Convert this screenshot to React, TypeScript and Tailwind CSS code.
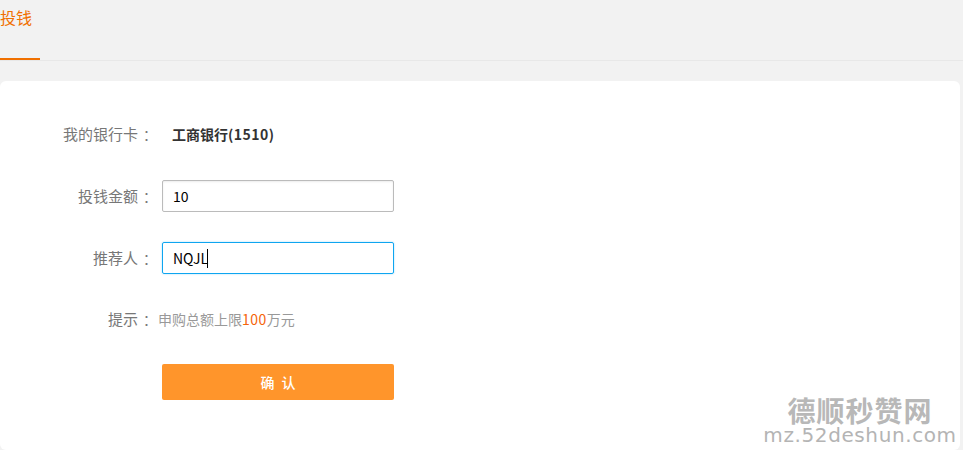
const font = "font-['Noto_Sans_CJK_SC','Liberation_Sans',sans-serif]";

const Label = ({ children }: { children: string }) => (
  <div className="flex w-[162px] shrink-0 items-center justify-end pr-[5px] text-[15px] text-[#777]">
    <span>{children}</span>
    <span className="ml-[5px] text-[14px]">：</span>
  </div>
);

export default function App() {
  return (
    <div className={`relative h-[450px] w-[963px] overflow-hidden bg-[#f2f2f2] ${font}`}>
      <div className="flex h-[61px] border-b border-[#e8e8e8]">
        <div className="h-[60px] w-[40px] border-b-2 border-[#f07000] pt-[6px] text-[16px] leading-[22px] text-[#f07000]">
          投钱
        </div>
      </div>

      <div className="mt-[20px] mr-[3px] flex h-[369px] flex-col rounded-[6px] bg-white">
        <div className="mt-[41px] flex h-[24px] items-center">
          <Label>我的银行卡</Label>
          <div className="pl-[10px] text-[14px] font-bold text-[#333]">
            工商银行<span className="tracking-[0.5px]">(1510)</span>
          </div>
        </div>

        <div className="mt-[34px] flex h-[32px] items-center">
          <Label>投钱金额</Label>
          <div className="flex h-[32px] w-[232px] items-center rounded-[2px] border border-[#bbb] pl-[10px] text-[14px] text-black shadow-[inset_0_1px_2px_rgba(0,0,0,0.08)]">
            10
          </div>
        </div>

        <div className="mt-[30px] flex h-[32px] items-center">
          <Label>推荐人</Label>
          <div className="flex h-[32px] w-[232px] items-center rounded-[2px] border border-[#0fa5f0] pl-[10px] text-[14px] text-black shadow-[0_0_2px_rgba(15,165,240,0.4)]">
            NQJL<span className="ml-[-1px] h-[19px] w-px bg-black" />
          </div>
        </div>

        <div className="mt-[35px] flex h-[20px] items-center">
          <Label>提示</Label>
          <div className="ml-[-4px] text-[14px] text-[#999]">
            申购总额上限<span className="tracking-[0.5px] text-[#f5640a]">100</span>万元
          </div>
        </div>

        <div className="mt-[35px] flex pl-[162px]">
          <div className="flex h-[36px] w-[232px] items-center justify-center gap-[7px] rounded-[2px] bg-[#ff952b] text-[14px] font-medium text-white">
            <span>确</span>
            <span>认</span>
          </div>
        </div>
      </div>

      {/* watermark */}
      <div className="absolute right-[3px] top-[395px] flex w-[200px] flex-col items-center text-[#b4b4b4]">
        <div className="text-[28px] font-bold leading-[30px] tracking-[1px] text-[#b8b8b8]">德顺秒赞网</div>
        <div className="whitespace-nowrap font-['DejaVu_Sans',sans-serif] text-[20px] leading-[20px] tracking-[0.6px]">
          mz.52deshun.com
        </div>
      </div>
    </div>
  );
}
